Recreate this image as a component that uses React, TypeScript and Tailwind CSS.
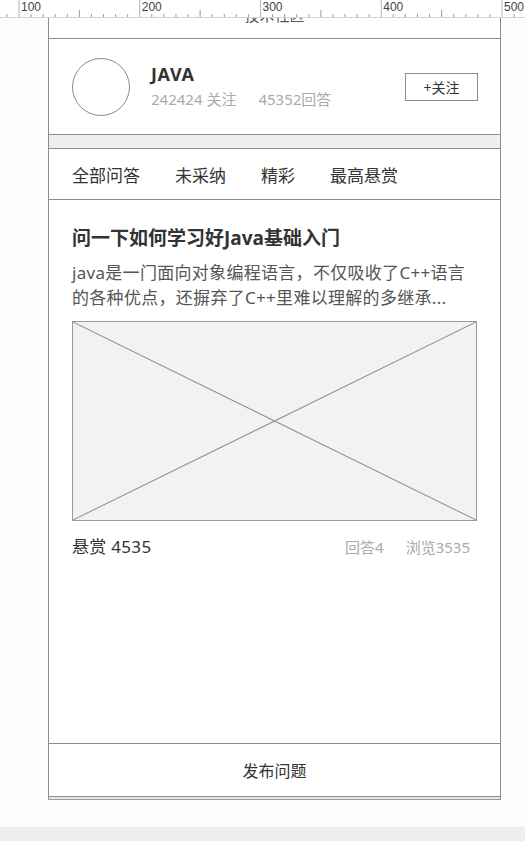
import React from "react";

const font = { fontFamily: '"Noto Sans", "Noto Sans CJK SC", sans-serif' };

// scale of the design ruler: 100 units ~ 120.75px, "100" sits at x=19
const Ruler = () => {
  const ticks: React.ReactNode[] = [];
  for (let u = 90; u <= 510; u += 10) {
    const x = 19 + (u - 100) * 1.2075;
    const major = u % 100 === 0;
    const mid = u % 50 === 0;
    const h = major ? 17 : mid ? 7 : 3;
    ticks.push(
      <line key={u} x1={x} x2={x} y1={17 - h} y2={17} stroke={major ? "#b5b5b5" : "#9a9a9a"} strokeWidth="1" />
    );
    if (major)
      ticks.push(
        <text key={`t${u}`} x={x + 2} y={11} fontSize="12" fill="#444" fontFamily="Liberation Sans, sans-serif">
          {u}
        </text>
      );
  }
  return (
    <div className="h-[18px] shrink-0 bg-white border-b border-[#d4d4d4]">
      <svg width="525" height="17" className="block">
        {ticks}
      </svg>
    </div>
  );
};

const Placeholder = () => (
  <div className="relative h-[200px] bg-[#f2f2f2] border border-[#9a9a9a]">
    <svg className="absolute inset-0 w-full h-full" viewBox="0 0 100 100" preserveAspectRatio="none">
      <line x1="0" y1="0" x2="100" y2="100" stroke="#8f8f8f" strokeWidth="1" vectorEffect="non-scaling-stroke" />
      <line x1="100" y1="0" x2="0" y2="100" stroke="#8f8f8f" strokeWidth="1" vectorEffect="non-scaling-stroke" />
    </svg>
  </div>
);

export default function App() {
  const tabs = ["全部问答", "未采纳", "精彩", "最高悬赏"];
  return (
    <div className="w-[525px] h-[841px] overflow-hidden bg-[#fdfdfd] flex flex-col" style={font}>
      <Ruler />
      <div className="flex shrink-0">
        <div className="w-[48px]" />
        <div className="w-[453px] flex flex-col">
          <div className="h-[779px] bg-white border-x border-[#8c8c8c] flex flex-col">
            {/* clipped header */}
            <div className="h-[21px] shrink-0 border-b border-[#8c8c8c] overflow-hidden flex justify-center">
              <span className="text-[15px] leading-[20px] text-[#555] -mt-[13px]">技术社区</span>
            </div>

            {/* profile */}
            <div className="h-[96px] shrink-0 border-b border-[#8c8c8c] flex items-center pl-[23px] pr-[22px]">
              <div className="w-[58px] h-[58px] rounded-full border border-[#8c8c8c] shrink-0" />
              <div className="ml-[21px] flex-1 flex flex-col">
                <span className="text-[18px] leading-[22px] font-bold text-[#333] tracking-[0.6px] -mt-[1px]">JAVA</span>
                <div className="text-[15px] leading-[20px] text-[#aaa] mt-[4px] flex">
                  <span>242424 关注</span>
                  <span className="ml-[22px]">45352回答</span>
                </div>
              </div>
              <button className="w-[73px] h-[28px] border border-[#8c8c8c] text-[14px] text-[#333] mt-[1px] flex items-center justify-center">
                +关注
              </button>
            </div>

            <div className="h-[14px] shrink-0 bg-[#efefef] border-b border-[#8c8c8c]" />

            {/* tabs */}
            <div className="h-[51px] shrink-0 border-b border-[#8c8c8c] flex items-center gap-[35px] pl-[23px] pt-[3px] text-[17px] text-[#333]">
              {tabs.map((t) => (
                <span key={t}>{t}</span>
              ))}
            </div>

            {/* question card */}
            <div className="flex-1 px-[23px] pt-[24px] border-b border-[#8c8c8c]">
              <h2 className="text-[19px] leading-[28px] font-bold text-[#333]">问一下如何学习好Java基础入门</h2>
              <p className="mt-[8px] text-[17px] leading-[25px] text-[#555] tracking-[0.3px] whitespace-nowrap">
                java是一门面向对象编程语言，不仅吸收了C++语言
                <br />
                的各种优点，还摒弃了C++里难以理解的多继承...
              </p>
              <div className="mt-[11px]">
                <Placeholder />
              </div>
              <div className="mt-[14px] flex items-center">
                <span className="text-[17px] leading-[24px] text-[#333] tracking-[0.3px]">悬赏 4535</span>
                <div className="ml-auto mr-[7px] flex gap-[22px] text-[15px] text-[#aaa]">
                  <span>回答4</span>
                  <span>浏览3535</span>
                </div>
              </div>
            </div>

            {/* bottom action */}
            <div className="h-[53px] shrink-0 border-b border-[#8c8c8c] flex items-center justify-center pt-[2px] text-[16px] text-[#333]">
              发布问题
            </div>
          </div>
          <div className="h-[3px] border-x border-b border-[#9a9a9a] bg-[#e6e6e6]" />
        </div>
      </div>
      <div className="h-[27px] shrink-0" />
      <div className="flex-1 bg-[#eeeeee]" />
    </div>
  );
}
